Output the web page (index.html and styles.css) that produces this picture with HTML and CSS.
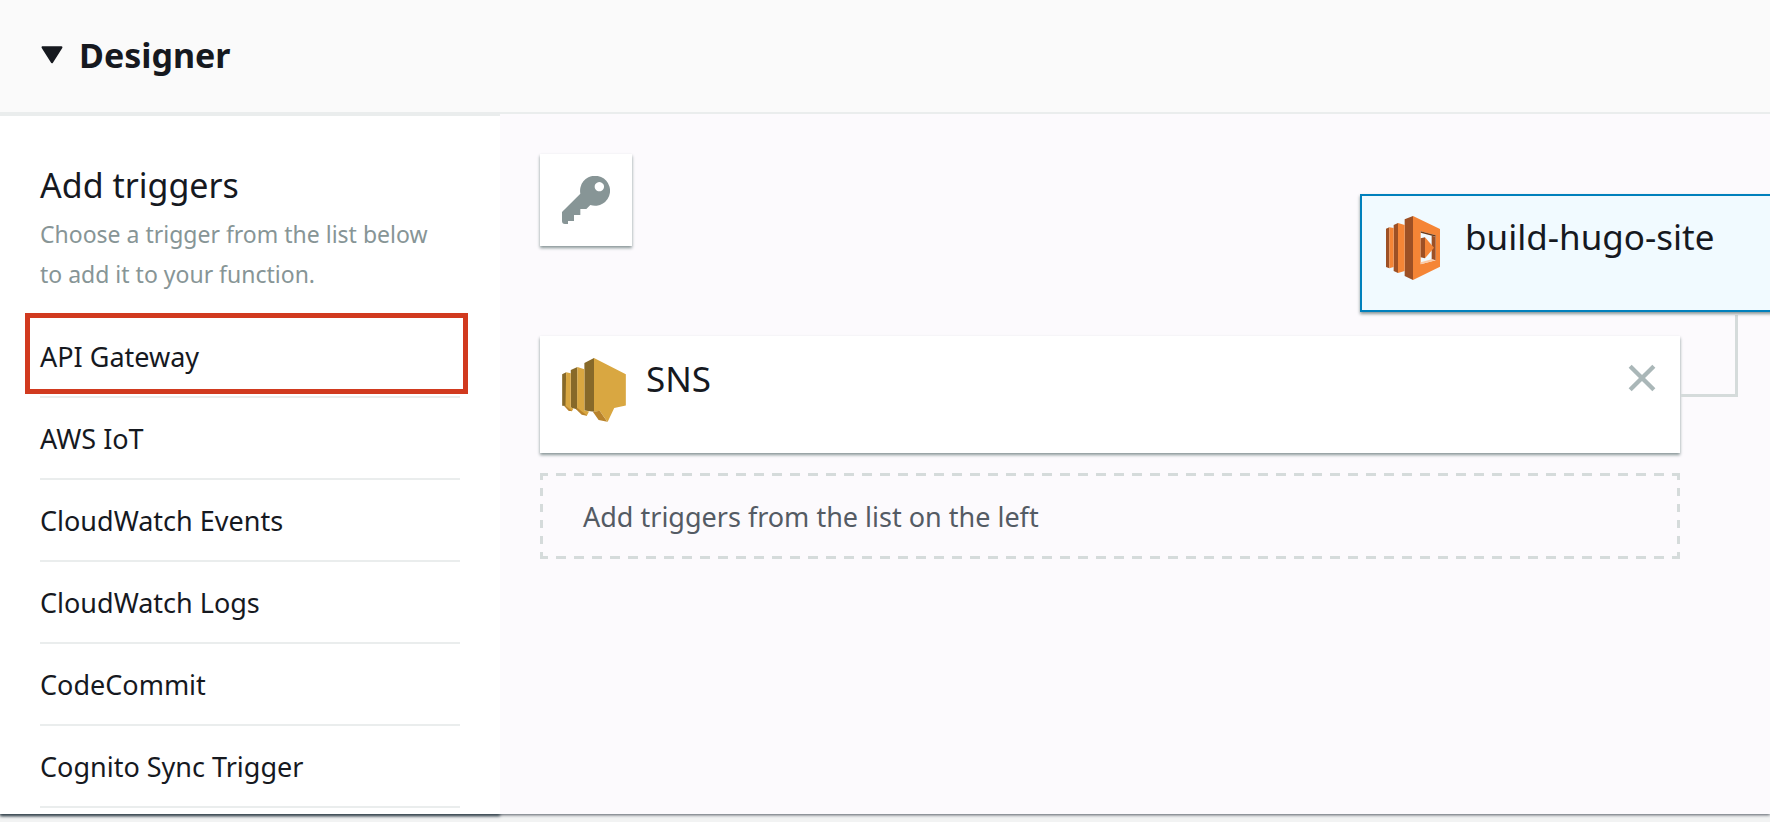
FILE: index.html
```html
<!DOCTYPE html>
<html lang="en">
<head>
<meta charset="utf-8">
<title>Designer</title>
<link rel="stylesheet" href="styles.css">
</head>
<body>
<section class="designer">
  <header class="designer-header">
    <button class="toggle" type="button" aria-expanded="true">
      <svg class="caret" viewBox="0 0 20 16" aria-hidden="true"><path d="M1.5 1h17L10 14.5z"/></svg>
      <span>Designer</span>
    </button>
  </header>
  <div class="designer-body">
    <aside class="sidebar">
      <h2 class="sidebar-title">Add triggers</h2>
      <p class="sidebar-help">Choose a trigger from the list below to add it to your function.</p>
      <ul class="trigger-list">
        <li class="trigger highlighted"><button type="button">API Gateway</button></li>
        <li class="trigger"><button type="button">AWS IoT</button></li>
        <li class="trigger"><button type="button">CloudWatch Events</button></li>
        <li class="trigger"><button type="button">CloudWatch Logs</button></li>
        <li class="trigger"><button type="button">CodeCommit</button></li>
        <li class="trigger"><button type="button">Cognito Sync Trigger</button></li>
      </ul>
    </aside>
    <main class="canvas">
      <button class="key-card" type="button" aria-label="Permissions">
        <svg class="key-icon" viewBox="96 108 144 144" aria-hidden="true">
          <path fill-rule="evenodd" d="M96 216 151 161A45 45 0 1 1 181 195L169 207H151V225H132V243H114V252H105Q96 252 96 243ZM208 126a14 14 0 1 0 .01 0Z"/>
        </svg>
      </button>
      <article class="card source">
        <svg class="sns-icon" viewBox="96 98 192 193" aria-hidden="true">
          <path class="sns-dark" d="M96 147 108 141V243L96 242ZM122 134 142 125V253L122 247ZM163 113 192 98V260L163 256Z"/>
          <path class="sns-light" d="M108 141 122 144V247L130 250 125 259 106 242ZM142 125 163 132V256L177 259 170 273 141 250ZM192 98 288 147V241L253 249 233 291 209 257 192 261Z"/>
          <path class="sns-under" d="M102 243 108 243 125 257 123 258H116ZM137 252 142 249 169 270 170 272 155 269ZM189 261 209 257 232 290 206 285Z"/>
        </svg>
        <span class="card-name">SNS</span>
        <button class="remove" type="button" aria-label="Remove SNS">
          <svg viewBox="0 0 26 26" aria-hidden="true"><path d="M2 2 24 24M24 2 2 24"/></svg>
        </button>
      </article>
      <p class="placeholder">Add triggers from the list on the left</p>
      <span class="connector"></span>
      <article class="card function">
        <svg class="lambda-icon" viewBox="37 33 162 192" aria-hidden="true">
          <path class="lam-dark" d="M37 71 47 67V190L37 186ZM60 60 73 54V204L60 198ZM93 43 118 33V225L93 213Z"/>
          <path class="lam-light" d="M47 67 60 69V186L47 190ZM73 54 93 60V198L73 204Z"/>
          <path class="lam-light" fill-rule="evenodd" d="M118 33 199 72V185L118 225ZM141 79V178L186 166V91Z"/>
          <path class="lam-shade" d="M141 79 186 91V95L141 83Z"/>
          <path class="lam-dark" d="M174 92 186 95V166L174 163ZM141 100 154 97V160L141 157Z"/>
          <path class="lam-pale" d="M141 172 174 163 186 166 141 178Z"/>
          <path class="lam-light" d="M154 97 181 128 154 160Z"/>
        </svg>
        <span class="card-name">build-hugo-site</span>
      </article>
    </main>
  </div>
</section>
</body>
</html>
```

FILE: styles.css
```css
* { box-sizing: border-box; }

body {
  margin: 0;
  padding-bottom: 8px;
  background: #f2f3f3;
  color: #16191f;
  font-family: "Noto Sans", "Open Sans", sans-serif;
  font-size: 27px;
  overflow-x: hidden;
}

h2, p, ul { margin: 0; padding: 0; }

button {
  padding: 0;
  border: 0;
  background: none;
  color: inherit;
  font: inherit;
  cursor: pointer;
}

.designer { box-shadow: 0 1px 3px #545b64; }

.designer-header {
  position: relative;
  padding: 33px 41px 35px;
  background: #fafafa;
  border-bottom: 2px solid #eaeded;
}

.toggle {
  display: flex;
  align-items: center;
  gap: 16px;
  font-size: 34px;
  font-weight: 700;
  line-height: 44px;
}

.caret {
  width: 22px;
  height: 18px;
  fill: #16191f;
  stroke: #16191f;
  stroke-width: 2;
  stroke-linejoin: round;
}

.designer-body { display: flex; }

.sidebar {
  flex: none;
  width: 500px;
  padding: 47px 40px 6px;
  background: #fff;
  border-top: 2px solid #eaeded;
  box-shadow: 0 2px 3px #37474f;
}

.sidebar-title {
  font-size: 34px;
  font-weight: 400;
  line-height: 44px;
}

.sidebar-help {
  margin: 7px 0 22px;
  padding-right: 24px;
  color: #879596;
  font-size: 23px;
  line-height: 40px;
}

.trigger-list { list-style: none; }

.trigger {
  position: relative;
  border-bottom: 2px solid #eaeded;
}

.trigger button {
  display: block;
  width: 100%;
  padding: 21px 0 19px;
  line-height: 40px;
  text-align: left;
}

.highlighted::after {
  content: "";
  position: absolute;
  inset: -3px -8px 2px -15px;
  border: 5px solid #d13a1f;
  pointer-events: none;
}

.canvas {
  position: relative;
  flex: 1;
  padding: 40px 90px 40px 40px;
  background: #fcfafd;
  overflow: hidden;
}

.key-card, .card {
  background: #fff;
  box-shadow: 0 2px 3px #879596;
}

.key-card {
  display: grid;
  place-items: center;
  width: 92px;
  height: 92px;
}

.key-icon {
  width: 48px;
  height: 48px;
  fill: #879596;
}

.card {
  display: flex;
  align-items: flex-start;
  gap: 20px;
  padding: 22px 24px 31px 22px;
}

.source { margin-top: 90px; }

.card-name {
  flex: 1;
  font-size: 35px;
  line-height: 42px;
}

.sns-icon { width: 64px; height: 64px; }
.sns-dark { fill: #876929; }
.sns-under { fill: #b9832b; }
.sns-light { fill: #d9a741; }

.remove { padding-top: 6px; }

.remove svg {
  display: block;
  width: 28px;
  height: 28px;
  fill: none;
  stroke: #aab7b8;
  stroke-width: 4;
}

.placeholder {
  --dash: #d5dbdb;
  --across: linear-gradient(to right, var(--dash) 5px, transparent 5px 13px, var(--dash) 13px);
  --down: linear-gradient(to bottom, var(--dash) 4px, transparent 4px 12px, var(--dash) 12px);
  margin-top: 20px;
  padding: 24px 43px 22px;
  background:
    var(--across) top / 18px 3px repeat-x,
    var(--across) bottom / 18px 3px repeat-x,
    var(--down) left / 3px 16px repeat-y,
    var(--down) right / 3px 16px repeat-y;
  color: #545b64;
  line-height: 40px;
}

.connector {
  position: absolute;
  top: 201px;
  right: 32px;
  width: 57px;
  height: 82px;
  border: solid #d5dbdb;
  border-width: 0 3px 3px 0;
}

.function {
  position: absolute;
  top: 80px;
  right: -30px;
  width: 440px;
  gap: 25px;
  padding: 20px 24px 30px;
  border: 2px solid #0080bc;
  background: #f1faff;
}

.lambda-icon { width: 54px; height: 64px; }
.lam-dark { fill: #9d5025; }
.lam-light { fill: #f58536; }
.lam-shade { fill: #6b3a19; }
.lam-pale { fill: #fcc9a4; }
```
